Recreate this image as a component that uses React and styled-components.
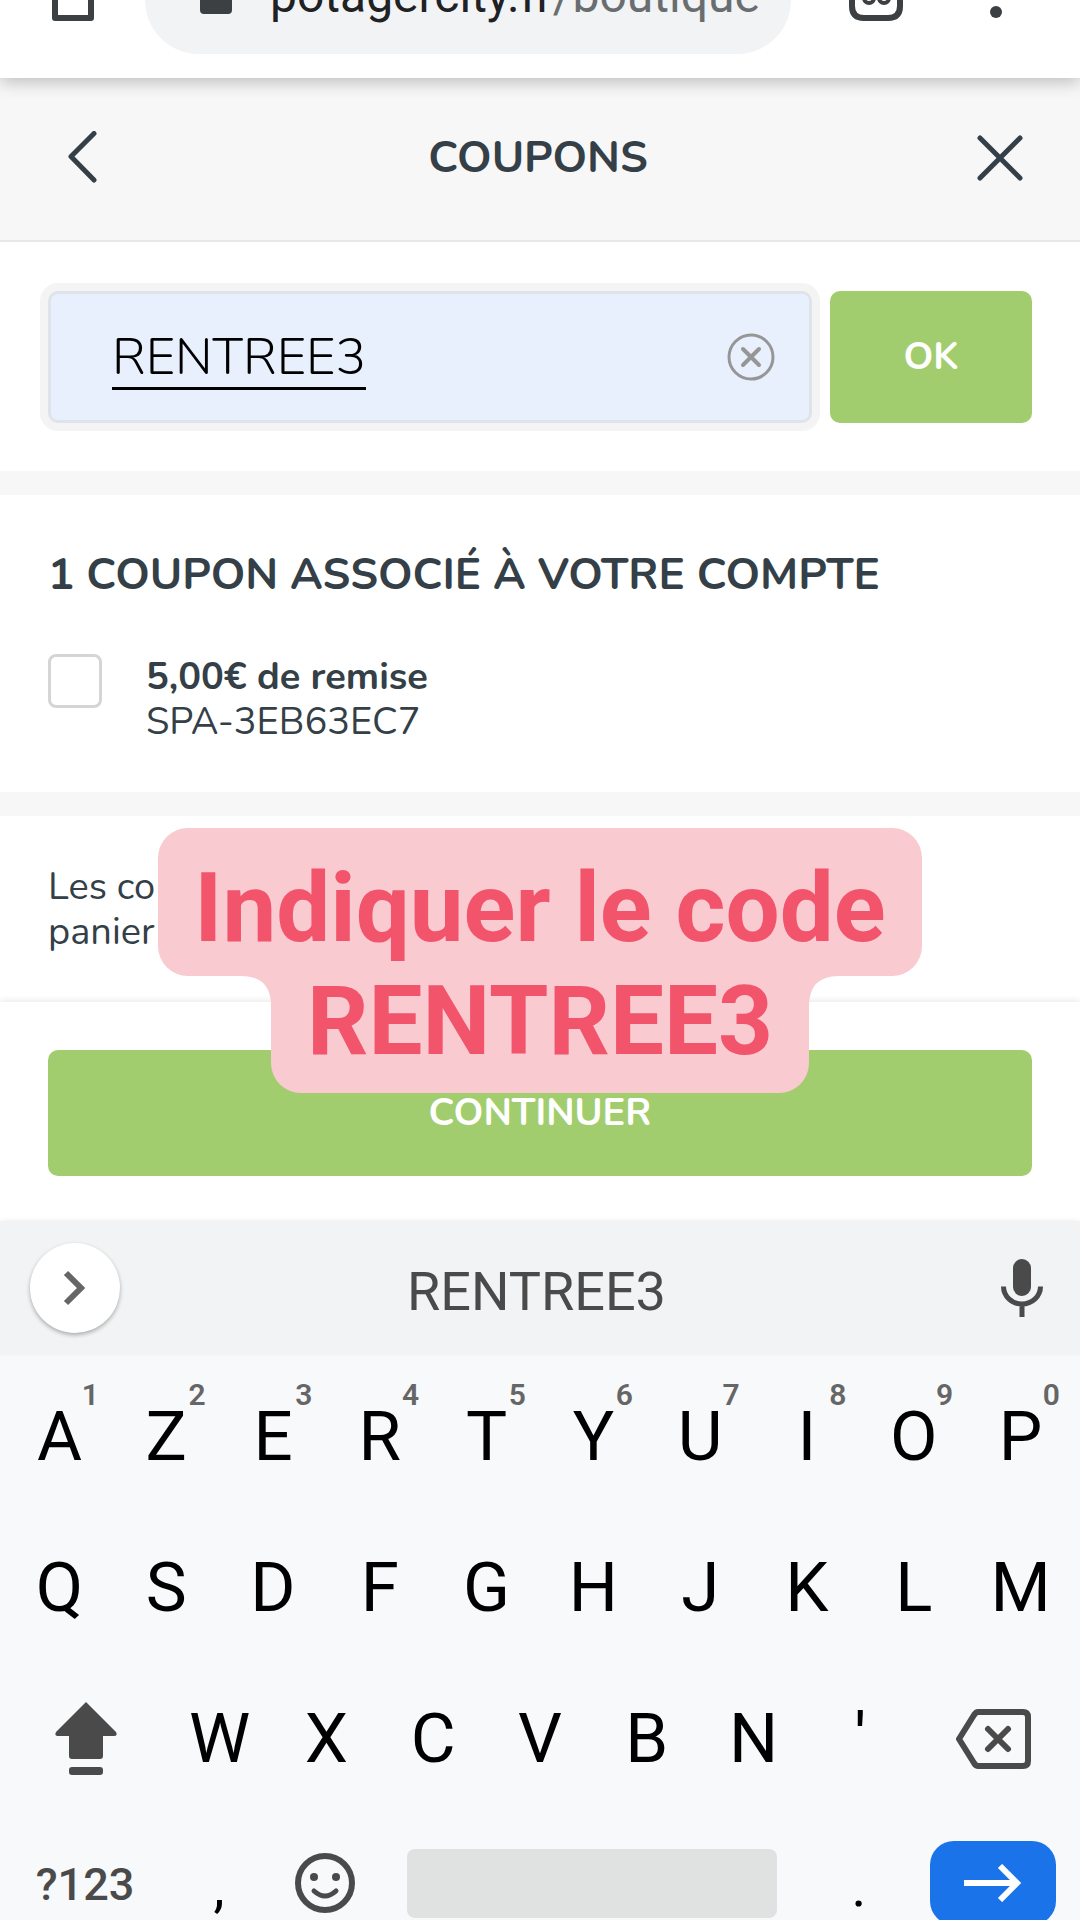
import React from 'react'
import styled, { createGlobalStyle } from 'styled-components'

const dark = '#343f47'
const grey = '#4a4a4a'
const green = '#a2cd6f'
const pink = '#f9cad0'
const siteFont = 'Nunito, "Open Sans", "Noto Sans", sans-serif'
const systemFont = 'Roboto, "Liberation Sans", sans-serif'

const GlobalStyle = createGlobalStyle`
  *{
    box-sizing:border-box;
  }
  body{
    margin:0;
    background:#f8f9fb;
  }
  button, input{
    margin:0;
    padding:0;
    border:0;
    background:none;
    font:inherit;
    color:inherit;
  }
  svg{
    display:block;
  }
`

const Screen = styled.div`
  display:flex;
  flex-direction:column;
  height:100vh;
  overflow:hidden;
  color:${dark};
  font-family:${siteFont};
`

const BrowserBar = styled.header`
  position:relative;
  z-index:1;
  display:flex;
  flex:none;
  height:78px;
  padding-right:49px;
  align-items:flex-start;
  background:#fff;
  box-shadow:0 4px 16px rgba(0,0,0,0.24);
  font-family:${systemFont};
`

const BarButton = styled.button`
  display:flex;
  flex:none;
  width:${props=>props.$width}px;
  justify-content:center;
`

const AddressBar = styled.div`
  display:flex;
  flex:1;
  height:54px;
  padding-left:55px;
  align-items:flex-start;
  gap:38px;
  border-radius:0 0 54px 54px;
  background:#f1f3f4;
`

const Address = styled.a`
  margin-top:-28px;
  font-size:48px;
  line-height:48px;
  color:#202124;
  text-decoration:none;
  span{
    color:#6a6d70;
  }
`

const SheetHeader = styled.div`
  display:flex;
  flex:none;
  height:164px;
  padding:0 54px 2px 64px;
  align-items:center;
  justify-content:space-between;
  border-bottom:2px solid #e8e8e8;
  background:#f7f7f7;
`

const SheetTitle = styled.h1`
  margin:0;
  font-size:44px;
  font-weight:700;
`

const Section = styled.section`
  flex:none;
  padding:${props=>props.$padding};
  background:#fff;
  border-bottom:${props=>props.$last ? 0 : 24}px solid #f7f7f7;
`

const CouponForm = styled.form`
  display:flex;
  gap:18px;
`

const CodeField = styled.label`
  display:flex;
  flex:1;
  min-width:0;
  height:132px;
  padding:0 34px 0 61px;
  align-items:center;
  border:3px solid #dfe4ea;
  border-radius:10px;
  background:#e8f0fe;
  box-shadow:0 0 0 8px #f4f4f4;
`

const CodeInput = styled.input`
  flex:1;
  min-width:0;
  outline:0;
  color:#000;
  font-size:51px;
  font-weight:300;
  text-decoration:underline;
  text-decoration-thickness:3px;
  text-underline-offset:13px;
`

const GreenButton = styled.button`
  width:${props=>props.$wide ? '100%' : '202px'};
  height:${props=>props.$wide ? 126 : 132}px;
  padding-bottom:2px;
  border-radius:10px;
  background:${green};
  color:#fff;
  font-size:38px;
  font-weight:700;
`

const SectionTitle = styled.h2`
  margin:0 0 51px;
  font-size:44px;
  line-height:56px;
  font-weight:700;
`

const CouponRow = styled.label`
  display:flex;
  align-items:flex-start;
  gap:44px;
`

const CheckBox = styled.input`
  appearance:none;
  width:54px;
  height:54px;
  border:3px solid #d5d5d5;
  border-radius:8px;
`

const CouponText = styled.div`
  font-size:38px;
  line-height:45px;
  strong{
    display:block;
    font-weight:700;
  }
`

const Notice = styled.p`
  margin:0;
  font-size:38px;
  line-height:45px;
`

const Footer = styled.div`
  position:relative;
  flex:none;
  padding:48px 48px 45px;
  background:#fff;
  box-shadow:0 -2px 6px rgba(0,0,0,0.08);
`

// caption sits over the notice and the footer button
const Caption = styled.div`
  position:absolute;
  bottom:128px;
  left:0;
  right:0;
  display:flex;
  flex-direction:column;
  align-items:center;
  color:#f2546b;
  font-family:${systemFont};
  font-size:96px;
  font-weight:700;
  pointer-events:none;
`

const CaptionTop = styled.div`
  height:148px;
  padding:24px 36px 0;
  border-radius:30px;
  background:${pink};
  line-height:112px;
`

const CaptionBottom = styled.div`
  display:flex;
  align-items:flex-start;
`

const CaptionWord = styled.div`
  height:117px;
  padding:0 36px;
  border-radius:0 0 30px 30px;
  background:${pink};
  line-height:90px;
`

const Keyboard = styled.div`
  position:relative;
  flex:1;
  background:#f8f9fb;
  color:#000;
  font-family:${systemFont};
`

const Suggestions = styled.div`
  display:grid;
  grid-template-columns:1fr auto 1fr;
  height:134px;
  padding:0 37px 0 30px;
  align-items:center;
  background:#f1f3f4;
  color:${grey};
  box-shadow:0 -1px 4px rgba(0,0,0,0.06);
`

const Suggestion = styled.button`
  padding-top:6px;
  font-size:54px;
`

const RoundButton = styled.button`
  display:flex;
  width:90px;
  height:90px;
  align-items:center;
  justify-content:center;
  border-radius:50%;
  background:#fff;
  box-shadow:0 2px 4px rgba(0,0,0,0.3);
`

const MicButton = styled.button`
  justify-self:end;
`

const KeyRow = styled.div`
  display:flex;
  height:151px;
  padding:0 6px;
`

const Key = styled.button`
  position:relative;
  display:flex;
  flex:${props=>props.$grow || 1} 1 0;
  min-width:0;
  padding-top:${props=>props.$top || 44}px;
  align-items:flex-start;
  justify-content:center;
  font-size:69px;
  line-height:76px;
`

const KeyHint = styled.span`
  position:absolute;
  top:24px;
  right:14px;
  color:#666;
  font-size:30px;
  font-weight:600;
  line-height:32px;
`

const BottomRow = styled(KeyRow)`
  height:113px;
  padding:0 24px 0 0;
`

const ModeKey = styled(Key)`
  color:${grey};
  font-size:45px;
  font-weight:500;
`

const MarkKey = styled(Key)`
  font-size:56px;
`

const SpaceBar = styled.button`
  flex:370 1 0;
  height:69px;
  margin:41px 11px 0 25px;
  border-radius:8px;
  background:#e0e2e1;
`

const EnterKey = styled.button`
  display:flex;
  flex:126 1 0;
  height:84px;
  margin-top:33px;
  align-items:center;
  justify-content:center;
  border-radius:24px;
  background:#1a73e8;
`

const topKeys = ['A', 'Z', 'E', 'R', 'T', 'Y', 'U', 'I', 'O', 'P']
const middleKeys = ['Q', 'S', 'D', 'F', 'G', 'H', 'J', 'K', 'L', 'M']
const bottomKeys = ['W', 'X', 'C', 'V', 'B', 'N', '\'']

const PageTop = () => (
  <BrowserBar>
    <BarButton $width={145} aria-label="Accueil">
      <svg width="42" height="22" viewBox="0 0 42 22" fill="none" stroke="#3c4043" strokeWidth="6">
        <path d="M3 -5V18H39V-5" strokeLinejoin="round" />
      </svg>
    </BarButton>
    <AddressBar>
      <svg width="32" height="14" viewBox="0 0 32 14">
        <path d="M0 0H32V10a4 4 0 0 1-4 4H4a4 4 0 0 1-4-4z" fill="#3c4043" />
      </svg>
      <Address href="#">potagercity.fr<span>/boutique</span></Address>
    </AddressBar>
    <BarButton $width={170} aria-label="Onglets">
      <svg width="54" height="22" viewBox="0 0 54 22" fill="none" stroke="#3c4043" strokeWidth="6">
        <path d="M3 -4V6q0 12 12 12H39q12 0 12-12V-4" />
        <circle cx="20" cy="-2" r="5" strokeWidth="4" />
        <circle cx="35" cy="-2" r="5" strokeWidth="4" />
      </svg>
    </BarButton>
    <BarButton $width={70} aria-label="Menu">
      <svg width="14" height="20" viewBox="0 0 14 20">
        <circle cx="7" cy="12" r="6" fill="#3c4043" />
      </svg>
    </BarButton>
  </BrowserBar>
)

const App = () => (
  <Screen>
    <GlobalStyle />
    <PageTop />
    <SheetHeader>
      <button aria-label="Retour">
        <svg width="36" height="54" viewBox="0 0 36 54" fill="none" stroke={dark} strokeWidth="5" strokeLinecap="round" strokeLinejoin="round">
          <path d="M30 2.500L7 25.500L30 49" />
        </svg>
      </button>
      <SheetTitle>COUPONS</SheetTitle>
      <button aria-label="Fermer">
        <svg width="50" height="50" viewBox="0 0 50 50" stroke={dark} strokeWidth="5" strokeLinecap="round">
          <path d="M4 5L44 45M44 5L4 45" />
        </svg>
      </button>
    </SheetHeader>
    <Section $padding="49px 48px 48px">
      <CouponForm onSubmit={e=>e.preventDefault()}>
        <CodeField>
          <CodeInput defaultValue="RENTREE3" aria-label="Code du coupon" />
          <svg width="48" height="48" viewBox="0 0 48 48" fill="none" stroke="#969696" strokeWidth="3" strokeLinecap="round">
            <circle cx="24" cy="24" r="22" />
            <path d="M16 16L32 32M32 16L16 32" strokeWidth="4" />
          </svg>
        </CodeField>
        <GreenButton type="submit">OK</GreenButton>
      </CouponForm>
    </Section>
    <Section $padding="52px 48px 48px">
      <SectionTitle>1 COUPON ASSOCIÉ À VOTRE COMPTE</SectionTitle>
      <CouponRow>
        <CheckBox type="checkbox" />
        <CouponText>
          <strong>5,00€ de remise</strong>
          SPA-3EB63EC7
        </CouponText>
      </CouponRow>
    </Section>
    <Section $padding="48px" $last>
      <Notice>Les co<br />panier</Notice>
    </Section>
    <Footer>
      <GreenButton $wide>CONTINUER</GreenButton>
      <Caption>
        <CaptionTop>Indiquer le code</CaptionTop>
        <CaptionBottom>
          <svg width="30" height="30" viewBox="0 0 30 30" fill={pink}>
            <path d="M0 0H30V30Q30 0 0 0z" />
          </svg>
          <CaptionWord>RENTREE3</CaptionWord>
          <svg width="30" height="30" viewBox="0 0 30 30" fill={pink}>
            <path d="M30 0H0V30Q0 0 30 0z" />
          </svg>
        </CaptionBottom>
      </Caption>
    </Footer>
    <Keyboard>
      <Suggestions>
        <RoundButton aria-label="Plus">
          <svg width="24" height="36" viewBox="0 0 24 36" fill="none" stroke="#666" strokeWidth="6">
            <path d="M3 3L18 18L3 33" />
          </svg>
        </RoundButton>
        <Suggestion>RENTREE3</Suggestion>
        <MicButton aria-label="Dictée">
          <svg width="42" height="58" viewBox="0 0 42 58">
            <rect x="12" y="0" width="18" height="37" rx="9" fill={grey} />
            <path d="M2.500 27.500a18.500 17.500 0 0 0 37 0M21 45V58" fill="none" stroke={grey} strokeWidth="5" />
          </svg>
        </MicButton>
      </Suggestions>
      <KeyRow>
        {topKeys.map((each, index)=><Key key={each}>{each}<KeyHint>{(index + 1) % 10}</KeyHint></Key>)}
      </KeyRow>
      <KeyRow>
        {middleKeys.map(each=><Key key={each}>{each}</Key>)}
      </KeyRow>
      <KeyRow>
        <Key $grow={1.5} $top={44} aria-label="Majuscule">
          <svg width="64" height="76" viewBox="0 0 64 76" fill={grey}>
            <path d="M32 1L62 31q2 4-2 4H49V55q0 3-3 3H18q-3 0-3-3V35H4q-4 0-2-4z" />
            <rect x="15" y="66" width="34" height="8" rx="3" />
          </svg>
        </Key>
        {bottomKeys.map(each=><Key key={each}>{each}</Key>)}
        <Key $grow={1.5} $top={52} aria-label="Effacer">
          <svg width="76" height="60" viewBox="0 0 76 60" fill="none" stroke={grey} strokeWidth="6" strokeLinejoin="round" strokeLinecap="round">
            <path d="M22 3H67q5 0 5 5V52q0 5-5 5H22q-2 0-4-3L3 30L18 6q2-3 4-3z" />
            <path d="M32 20L52 40M52 20L32 40" />
          </svg>
        </Key>
      </KeyRow>
      <BottomRow>
        <ModeKey $grow={170} $top={39}>?123</ModeKey>
        <MarkKey $grow={98} $top={41}>,</MarkKey>
        <Key $grow={114} $top={45} aria-label="Emoji">
          <svg width="60" height="60" viewBox="0 0 60 60" fill="none" stroke={grey} strokeWidth="6">
            <circle cx="30" cy="30" r="27" />
            <circle cx="19" cy="24" r="4" fill={grey} stroke="none" />
            <circle cx="41" cy="24" r="4" fill={grey} stroke="none" />
            <path d="M19 38q11 10 22 0" strokeLinecap="round" strokeWidth="5" />
          </svg>
        </Key>
        <SpaceBar aria-label="Espace" />
        <MarkKey $grow={142} $top={41}>.</MarkKey>
        <EnterKey aria-label="Valider">
          <svg width="58" height="38" viewBox="0 0 58 38" fill="none" stroke="#fff" strokeWidth="6">
            <path d="M0 19H52M36 2L53 19L36 36" />
          </svg>
        </EnterKey>
      </BottomRow>
    </Keyboard>
  </Screen>
)

export default App
